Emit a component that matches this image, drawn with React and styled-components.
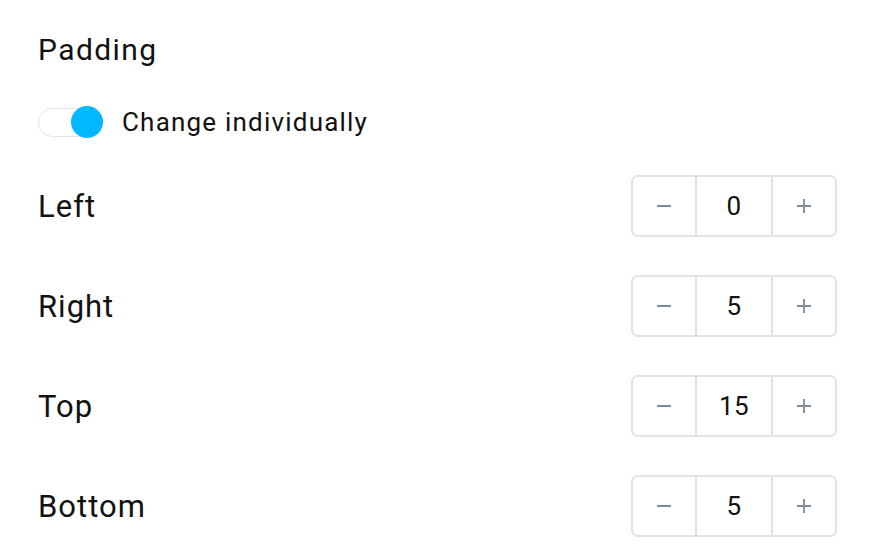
import React, { useState } from 'react';
import styled, { createGlobalStyle } from 'styled-components';

const GlobalStyle = createGlobalStyle`
  body {
    margin: 0;
    background: #ffffff;
    font-family: Roboto, "Liberation Sans", Arial, sans-serif;
    color: #111111;
  }
`;

const initial = [
  { key: 'left', label: 'Left', value: 0 },
  { key: 'right', label: 'Right', value: 5 },
  { key: 'top', label: 'Top', value: 15 },
  { key: 'bottom', label: 'Bottom', value: 5 },
];

const MinusIcon = () => (
  <svg width="16" height="16" viewBox="0 0 16 16">
    <path d="M1 8h14" stroke="currentColor" strokeWidth="1.8" />
  </svg>
);

const PlusIcon = () => (
  <svg width="16" height="16" viewBox="0 0 16 16">
    <path d="M1 8h14M8 1v14" stroke="currentColor" strokeWidth="1.8" />
  </svg>
);

const App = () => {
  const [items, setItems] = useState(initial);
  const [individual, setIndividual] = useState(true);

  const change = (key, delta) =>
    setItems((list) =>
      list.map((it) => (it.key === key ? { ...it, value: Math.max(0, it.value + delta) } : it))
    );

  return (
    <>
      <GlobalStyle />
      <Panel>
        <Title>Padding</Title>
        <ToggleRow onClick={() => setIndividual(!individual)}>
          <Track>
            <Knob $on={individual} />
          </Track>
          <ToggleLabel>Change individually</ToggleLabel>
        </ToggleRow>
        <Rows>
          {items.map((it) => (
            <Row key={it.key}>
              <RowLabel>{it.label}</RowLabel>
              <Stepper>
                <StepButton onClick={() => change(it.key, -1)}>
                  <MinusIcon />
                </StepButton>
                <Value>{it.value}</Value>
                <StepButton onClick={() => change(it.key, 1)}>
                  <PlusIcon />
                </StepButton>
              </Stepper>
            </Row>
          ))}
        </Rows>
      </Panel>
    </>
  );
};

const Panel = styled.div`
  padding: 30px 45px 0 38px;
  display: flex;
  flex-direction: column;
`;

const Title = styled.h1`
  margin: 0;
  font-size: 30px;
  font-weight: 400;
  letter-spacing: 1.4px;
  line-height: 40px;
`;

const ToggleRow = styled.div`
  display: flex;
  align-items: center;
  gap: 22px;
  margin-top: 36px;
  height: 32px;
  cursor: pointer;
`;

const Track = styled.div`
  position: relative;
  width: 62px;
  height: 29px;
  box-sizing: border-box;
  border: 1.5px solid #e4e4e4;
  border-radius: 15px;
  background: #fff;
`;

const Knob = styled.div`
  position: absolute;
  top: 50%;
  left: ${(p) => (p.$on ? '32px' : '-2px')};
  width: 32px;
  height: 32px;
  margin-top: -16px;
  border-radius: 50%;
  background: ${(p) => (p.$on ? '#00b8ff' : '#cfcfcf')};
`;

const ToggleLabel = styled.span`
  font-size: 26px;
  letter-spacing: 1.2px;
  line-height: 32px;
`;

const Rows = styled.div`
  display: flex;
  flex-direction: column;
  gap: 38px;
  margin-top: 37px;
`;

const Row = styled.div`
  display: flex;
  align-items: center;
  justify-content: space-between;
  height: 62px;
`;

const RowLabel = styled.span`
  font-size: 31px;
  letter-spacing: 1px;
`;

const Stepper = styled.div`
  display: grid;
  grid-template-columns: 62px 78px 62px;
  height: 62px;
  box-sizing: border-box;
  border: 2px solid #e2e2e2;
  border-radius: 7px;
  overflow: hidden;
`;

const StepButton = styled.button`
  border: none;
  background: #fff;
  color: #7d8c98;
  padding: 0;
  cursor: pointer;
  display: flex;
  align-items: center;
  justify-content: center;
`;

const Value = styled.div`
  display: flex;
  align-items: center;
  justify-content: center;
  font-size: 26px;
  letter-spacing: 0.5px;
  border-left: 2px solid #e2e2e2;
  border-right: 2px solid #e2e2e2;
`;

export default App;
